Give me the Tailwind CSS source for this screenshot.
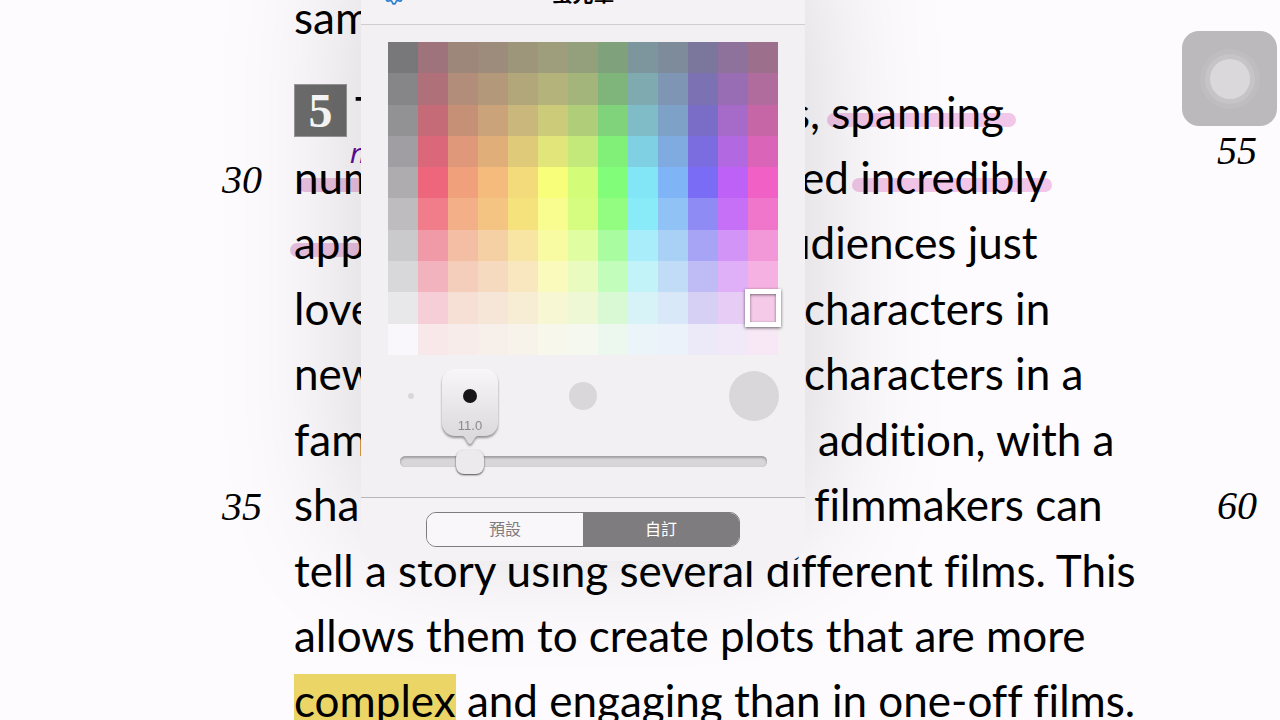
<!DOCTYPE html>
<html lang="zh-Hant">
<head>
    <meta charset="UTF-8">
    <meta name="viewport" content="width=device-width, initial-scale=1.0">
    <title>螢光筆</title>
    <script src="https://cdn.jsdelivr.net/npm/@tailwindcss/browser@4"></script>
</head>
<body class="bg-[#fdfbfd] text-black overflow-hidden">

<div class="relative h-screen overflow-hidden">

    <!-- Document page -->
    <main lang="en" class="relative isolate flex -mt-[15px] font-['Lato','Open_Sans',sans-serif] [font-variant-ligatures:none] text-[44px] leading-[65px] whitespace-nowrap">
        <article class="grow min-w-0">
            <p class="pl-[294px]">same</p>

            <div class="mt-[30px] flex flex-col gap-px">
                <div>
                    <div class="flex pl-[294px]">
                        <span class="w-[497px] shrink-0 flex items-start gap-2">
                            <b class="mt-[4px] size-[53px] bg-[#6d6d6d] border border-[#9a9a9a] text-white text-center leading-[51px] font-['Liberation_Serif',serif] text-[48px]">5</b>
                            <span>T</span>
                        </span>
                        <span>s, <mark class="relative bg-transparent before:absolute before:-z-10 before:-left-1 before:-right-3 before:top-[27px] before:h-[14px] before:rounded-full before:bg-[#f2c6e8]">spanning</mark></span>
                    </div>
                    <div class="flex">
                        <i class="w-[262px] pt-1 mr-8 shrink-0 text-right leading-[61px] font-['Liberation_Serif',serif] text-[40px]">30</i>
                        <span class="w-[507px] shrink-0"><mark class="relative bg-transparent before:absolute before:-z-10 before:left-1 before:right-0 before:top-[27px] before:h-[14px] before:rounded-full before:bg-[#ebc2e2]">numerous</mark></span>
                        <span>ed <mark class="relative bg-transparent before:absolute before:-z-10 before:-left-2 before:-right-1 before:top-[27px] before:h-[14px] before:rounded-full before:bg-[#f2c6e8]">incredibly</mark></span>
                    </div>
                    <div class="flex pl-[294px]">
                        <span class="w-[492px] shrink-0"><mark class="relative bg-transparent before:absolute before:-z-10 before:-left-1 before:right-0 before:top-[27px] before:h-[14px] before:rounded-full before:bg-[#ebc2e2]">app</mark></span>
                        <span>udiences just</span>
                    </div>
                </div>
                <div>
                    <div class="flex pl-[294px]">
                        <span class="w-[510px] shrink-0">love</span>
                        <span>characters in</span>
                    </div>
                    <div class="flex pl-[294px]">
                        <span class="w-[510px] shrink-0">new</span>
                        <span>characters in a</span>
                    </div>
                </div>
                <div>
                    <div class="flex pl-[294px]">
                        <span class="w-[524px] shrink-0">fam</span>
                        <span>addition, with a</span>
                    </div>
                    <div class="flex">
                        <i class="w-[262px] pt-1 mr-8 shrink-0 text-right leading-[61px] font-['Liberation_Serif',serif] text-[40px]">35</i>
                        <span class="w-[520px] shrink-0">shar</span>
                        <span>filmmakers can</span>
                    </div>
                </div>
                <div>
                    <div class="pl-[294px]">tell a story using several different films. This</div>
                    <div class="pl-[294px]">allows them to create plots that are more</div>
                    <div class="pl-[294px]"><mark class="bg-[#ead566]">complex</mark> and engaging than in one-off films.</div>
                </div>
            </div>
        </article>

        <!-- Line numbers of the next column -->
        <aside class="shrink-0 pr-[23px] pt-[133px] flex flex-col gap-[290px] font-['Liberation_Serif',serif] italic text-[40px]">
            <span>55</span>
            <span>60</span>
        </aside>

        <span class="absolute left-[350px] top-[151px] font-['Open_Sans',sans-serif] italic text-[28px] leading-8 text-[#5b0a9c]">n</span>
    </main>

    <!-- Highlighter popover -->
    <section class="absolute left-[361px] -top-7 w-[444px] rounded-[18px] bg-[#f4f2f5] shadow-[0_-30px_140px_rgba(0,0,0,0.17)] font-['Liberation_Sans','Noto_Sans_CJK_TC',sans-serif]">
        <header class="relative h-[53px] border-b border-[#cfcdd0] flex justify-center">
            <button type="button" aria-label="設定" class="absolute left-[22px] top-[11px] text-[#2b7fd0]">
                <svg class="size-[22px]" viewBox="0 0 22 22" fill="none" stroke="currentColor" stroke-width="1.7" stroke-linejoin="round">
                    <path d="M9.4 1h3.2l.6 2.6 1.9.8 2.3-1.4 2.2 2.2-1.4 2.3.8 1.9 2.4.6v2.6l-2.4.6-.8 1.9q1 1.700-.2 2.600t-3-.2l-1.600.5-1.400 2.900h-2l-1.400-2.900-1.600-.5q-1.800 1.100-3 .2t-.2-2.600l-.8-1.900-2.400-.6v-2.600l2.400-.6.8-1.900-1.400-2.300 2.200-2.200 2.300 1.400 1.900-.8z"/>
                    <circle cx="11" cy="10" r="4"/>
                </svg>
            </button>
            <h1 class="pt-[10px] text-[21px] leading-6 font-bold">螢光筆</h1>
        </header>

        <div class="bg-[#f2f0f3] pt-[17px] pb-6">
            <div id="swatches" class="mx-auto w-[390px] h-[313px] grid grid-cols-13 grid-rows-10"></div>

            <div class="relative ml-[25px] mt-[15px] w-[393px] h-[51px] flex items-center justify-between">
                <span class="w-[50px] flex justify-center"><span class="size-[6px] rounded-full bg-[#d9d7da]"></span></span>
                <span class="size-7 rounded-full bg-[#d9d7da]"></span>
                <span class="size-[50px] rounded-full bg-[#d9d7da]"></span>

                <!-- Current size bubble -->
                <div class="absolute left-14 -top-px w-[56px] drop-shadow-[0_2px_1px_rgba(0,0,0,0.4)]">
                    <div class="h-[67px] rounded-[13px] bg-linear-to-b from-[#f8f6f9] to-[#dcdadd] flex flex-col items-center pt-5">
                        <span class="size-[14px] rounded-full bg-[#171518]"></span>
                        <label for="size" class="mt-[15px] text-[13px] leading-4 text-[#8b898c]">11.0</label>
                    </div>
                    <svg class="mx-auto w-[16px] h-2 block" viewBox="0 0 16 8"><path d="M0 0h16c-4 0-5 8-8 8s-4-8-8-8z" fill="#dcdadd"/></svg>
                </div>
            </div>

            <input id="size" type="range" min="1" max="61" value="11"
                   class="block mx-auto mt-7 w-[367px] h-6 appearance-none bg-transparent
                          [&::-webkit-slider-runnable-track]:h-[11px] [&::-webkit-slider-runnable-track]:rounded-full [&::-webkit-slider-runnable-track]:bg-[#d8d6d9] [&::-webkit-slider-runnable-track]:shadow-[inset_0_2px_2px_#a3a1a4,inset_0_0_1px_#a3a1a4]
                          [&::-webkit-slider-thumb]:appearance-none [&::-webkit-slider-thumb]:w-7 [&::-webkit-slider-thumb]:h-6 [&::-webkit-slider-thumb]:-mt-[6px] [&::-webkit-slider-thumb]:rounded-[8px] [&::-webkit-slider-thumb]:bg-[#eceaed] [&::-webkit-slider-thumb]:shadow-[0_1px_2px_rgba(0,0,0,0.7)]">
        </div>

        <footer class="border-t border-[#b8b6b9] pt-[14px] pb-[14px]">
            <div class="mx-auto w-[314px] h-[35px] flex rounded-[10px] border border-[#7f7c7f] overflow-hidden text-[16px]">
                <button type="button" class="flex-1 bg-[#f9f7fa] text-[#7f7c7f]">預設</button>
                <button type="button" class="flex-1 bg-[#7f7c7f] text-white">自訂</button>
            </div>
        </footer>
    </section>

    <!-- Floating touch button -->
    <button type="button" aria-label="AssistiveTouch" class="absolute right-[3px] top-[31px] size-[95px] rounded-[17px] bg-[#bbb9bc] flex items-center justify-center">
        <span class="size-[60px] rounded-full bg-[#bfbdc0] flex items-center justify-center">
            <span class="size-[50px] rounded-full bg-[#c6c4c7] flex items-center justify-center">
                <span class="size-10 rounded-full bg-[#dad8db]"></span>
            </span>
        </span>
    </button>
</div>

<script>
    const rows = [
        '787779 9f737c 9d877b 9d8b7b 9e967b 9e9e7c 949f7c 7fa17b 7d959c 7d8b9b 7b779c 8e729c 9c708d',
        '868587 b0707a b18d7a b3987a b2a77b b4b37c a3b57b 7fb57b 7eaab0 7e96b3 7c71b3 996db3 b06c9c',
        '929193 c56b78 c69077 caa37b cab77b cbcb79 b0cd79 80d37a 7fbcc8 7ea1c7 7a6dc8 a66ac9 c666a6',
        'a09da3 db677b df987a e0ae79 dfca7a e2e67a c2e97a 80f078 80d0e3 7fabe0 7b6ddf b268e0 da64b7',
        'afacb0 ee667c f1a07c f4bb7c f3db7c f8fd7a d3fd79 82fd79 82e6f7 7fb5f6 7b6cf6 be61f6 f060c5',
        'bebcbf f17d8a f3af87 f4c582 f5e27c f9fd90 d6fd80 92fd80 8aebf8 90c2f5 8f8bf4 c570f6 f076cc',
        'cac9cb f19aa7 f4bea5 f4d0a4 f8e5a4 f9fba3 e0fda2 a9fda0 a8edf9 a9d1f5 a7a4f6 d394f7 f297d8',
        'd8d7d9 f3b3be f5cdbb f6dabf f8e7bf f9fabb e9fbbf c3fdbb c1f3f9 c0dcf7 bfbbf5 dfb0f8 f4b1e1',
        'e8e7ea f5ced8 f6dfd5 f6e6d8 f6edd4 f8f7d4 eff8d5 d9f9d4 d7f3f8 d8e8f8 d6d1f4 e7cdf5 f4cae8',
        'f9f7fb f8e8ea f7ecea f7efea f7f2ea f8f7ec f4f8ee ecf8ed ebf4f9 ecf2fa eceaf8 f1e8f8 f8e7f5'
    ];
    const selected = 'f4cae8';

    const swatches = document.getElementById('swatches');
    rows.forEach(row => {
        row.split(' ').forEach(color => {
            const cell = document.createElement('button');
            cell.type = 'button';
            cell.ariaLabel = '#' + color;
            cell.style.backgroundColor = '#' + color;
            if (color === selected) {
                cell.className = 'relative -m-[3px] border-[5px] border-white shadow-[0_1px_3px_rgba(0,0,0,0.6),inset_0_1px_3px_rgba(0,0,0,0.5)]';
            }
            swatches.appendChild(cell);
        });
    });
</script>

</body>
</html>
